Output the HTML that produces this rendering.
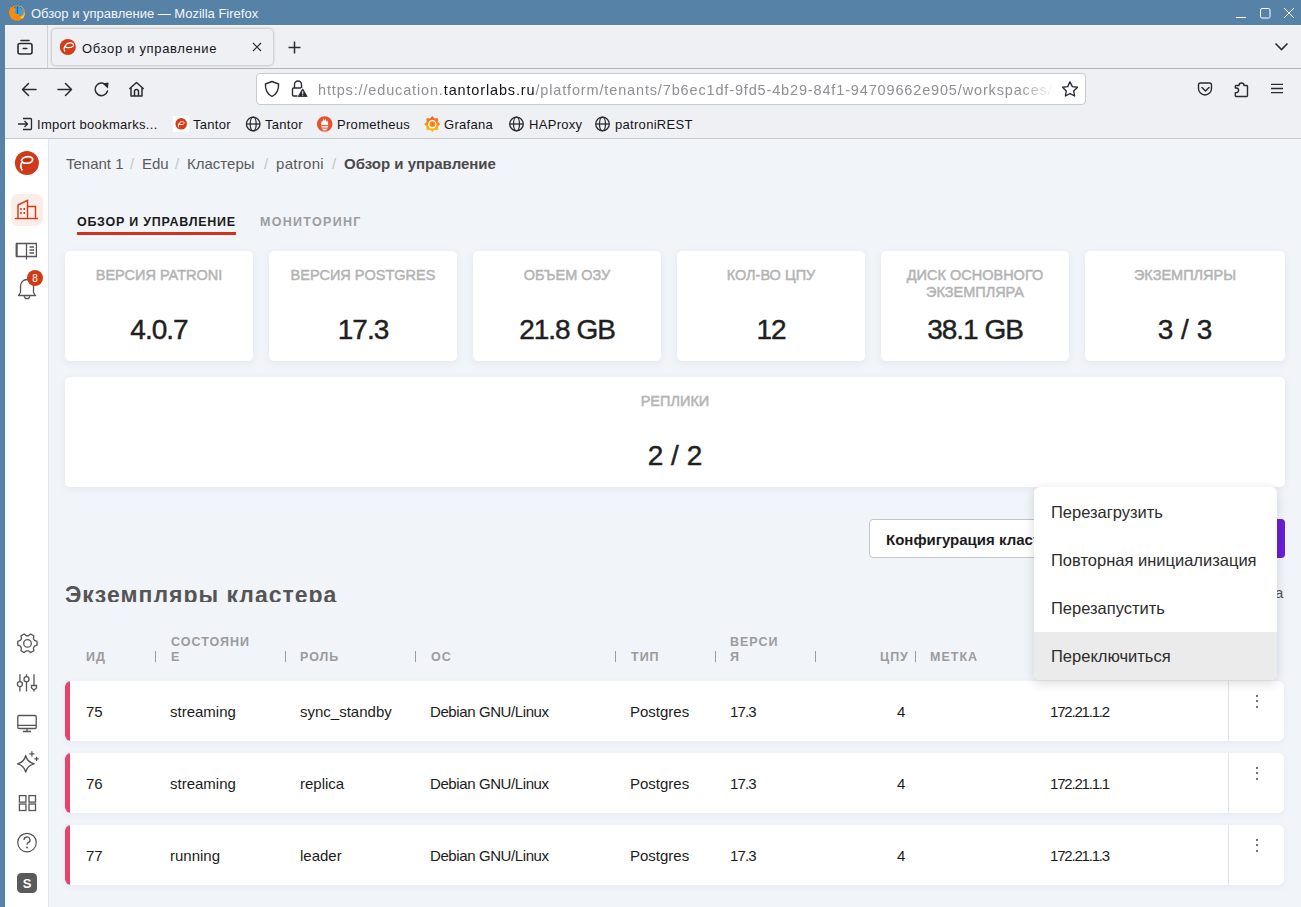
<!DOCTYPE html>
<html><head><meta charset="utf-8">
<style>
*{box-sizing:border-box;margin:0;padding:0}
html,body{width:1301px;height:907px;overflow:hidden;font-family:"Liberation Sans",sans-serif;background:#f1f4f9}
.abs{position:absolute}
#titlebar{left:0;top:0;width:1301px;height:25px;background:#5682a8}
#frameL{left:0;top:0;width:5px;height:907px;background:#5682a8}
#tabstrip{left:5px;top:25px;width:1296px;height:44px;background:#eff0f3;border-bottom:1px solid #b3b3b8}
#navbar{left:5px;top:69px;width:1296px;height:39px;background:#eff0f3}
#bmbar{left:5px;top:108px;width:1296px;height:31px;background:#eff0f3;border-bottom:1px solid #c8c8cc}
.ui{font-size:13px;color:#15141a;letter-spacing:0.3px;margin-top:1px}
#app{left:5px;top:139px;width:1296px;height:768px;background:#f1f4f9;overflow:hidden}
#sidebar{left:0;top:0;width:44px;height:768px;background:#fff;border-right:1px solid #e4e5ea}
.bc{position:absolute;top:155px;font-size:15px;color:#5a5a5a;line-height:18px;white-space:nowrap}
.sl{color:#c4c4c4}
.card{position:absolute;background:#fff;border-radius:5px;box-shadow:0 2px 8px rgba(60,70,110,0.07)}
.lbl{position:absolute;left:0;right:0;text-align:center;font-size:14.5px;color:#b4b4b4;font-weight:normal;-webkit-text-stroke:0.5px #b4b4b4;letter-spacing:0px;line-height:17px}
.val{position:absolute;left:0;right:0;text-align:center;font-size:28px;color:#1f1f1f;line-height:32px;-webkit-text-stroke:0.45px #1f1f1f;margin-top:1px;letter-spacing:-1px}
.th{position:absolute;margin-top:1px;font-size:12.5px;font-weight:bold;color:#9b9b9b;letter-spacing:1px;line-height:15px}
.sep{position:absolute;width:1px;height:11px;background:#9b9b9b}
.row{position:absolute;left:65px;width:1219px;height:59.5px;background:#fff;border-radius:6px;box-shadow:0 2px 6px rgba(60,70,110,0.06);overflow:hidden}
.row::before{content:"";position:absolute;left:0;top:0;bottom:0;width:4.5px;background:#e8436a}
.rdiv{position:absolute;left:1163px;top:0;width:1px;height:60px;background:#e4e6ec}
.dots{position:absolute;left:1191px;top:13.5px;width:2px}
.dots i{display:block;width:2.2px;height:2.2px;background:#444;border-radius:50%;margin-bottom:3.4px}
.td{position:absolute;margin-top:1px;font-size:15px;color:#1c1c1c;line-height:18px}
.mi{position:absolute;left:0;width:243px;height:48px;font-size:16.5px;color:#2c2c2c;padding-left:17px;line-height:50px}
</style></head><body>
<div id="titlebar" class="abs"></div>
<div id="frameL" class="abs"></div>
<div id="tabstrip" class="abs"></div>
<div id="navbar" class="abs"></div>
<div id="bmbar" class="abs"></div>


<div class="abs" style="left:52px;top:29px;width:221px;height:36px;background:#eff0f3;border-radius:4px;box-shadow:0 0 3px rgba(0,0,0,0.35)"></div>
<div class="abs" style="left:256px;top:73px;width:830px;height:32px;background:#fff;border:1px solid #c9c9cf;border-radius:4px"></div>
<svg class="abs" style="left:0;top:0" width="1301" height="140" viewBox="0 0 1301 140">
 <!-- firefox logo -->
 <defs>
  <radialGradient id="ffg" cx="0.4" cy="0.35" r="0.7"><stop offset="0" stop-color="#ffd54a"/><stop offset="0.5" stop-color="#ff9a1f"/><stop offset="1" stop-color="#f2561d"/></radialGradient>
 </defs>
 <circle cx="17" cy="13" r="7.7" fill="#ff8a00"/>
 <path d="M20.5 6 A7.7 7.7 0 0 1 22.5 18.5 L20 17 A5 5 0 0 0 19 7Z" fill="#ffd04a"/>
 <circle cx="18.2" cy="11.3" r="5.2" fill="#3a9ee8"/>
 <path d="M17.5 6.3 V16.5" stroke="#1f5d9e" stroke-width="1.2"/>
 <path d="M14 8 L15.5 6.5 M20 6.8 L21.5 8.5" stroke="#235e98" stroke-width="1"/>
 <path d="M9.3 13 C9.5 9.5 10.5 7.5 10.8 6.8 L12.2 8.2 L14 7.3 L15.2 9.5 C14.6 10.5 13.8 11.5 14.5 12.8 C15.5 14 17.5 14 19.5 14.2 C19 16 17.5 17.5 15.5 17.6 C12 17.6 9.3 16 9.3 13Z" fill="#ff8c00"/>
 <path d="M15 9.5 C14.6 10.5 14 11.2 14.3 12" stroke="#ffa01a" stroke-width="0.8" fill="none"/>
 <!-- window buttons -->
 <path d="M1236 17.5h10" stroke="#fff" stroke-width="1"/>
 <rect x="1260.5" y="8.5" width="9.5" height="9.5" rx="1.5" fill="none" stroke="#fff" stroke-width="1"/>
 <path d="M1284 8l10 10M1294 8l-10 10" stroke="#fff" stroke-width="1"/>
 <line x1="5" y1="25.5" x2="1301" y2="25.5" stroke="#f7f6f4" stroke-width="1"/>
 <!-- tab list icon -->
 <g fill="none" stroke="#2b2a33" stroke-width="1.6" stroke-linecap="round">
  <path d="M21 40.5h8"/>
  <rect x="18" y="43.5" width="14" height="10.5" rx="2"/>
  <path d="M23.3 48.5h3.5"/>
 </g>
 <line x1="47.5" y1="25" x2="47.5" y2="68" stroke="#d0d0d6" stroke-width="1"/>
 <!-- tab favicon -->
 <circle cx="67.8" cy="47" r="8" fill="#d53c18"/>
 <path d="M64.8 51.2 C63.8 49.5 64 47.3 65.5 45.5 M65.5 47.2 C65 44.5 67.5 42.8 70.5 42.9 C73 43 74 44.5 73.2 46 C72.3 47.4 69.5 47.8 66.2 47.4" fill="none" stroke="#fff" stroke-width="1.2" stroke-linecap="round"/>
 <!-- tab close -->
 <path d="M253 43l8 8M261 43l-8 8" stroke="#2b2a33" stroke-width="1.15"/>
 <!-- new tab plus -->
 <path d="M294.5 41.5v12M288.5 47.5h12" stroke="#2b2a33" stroke-width="1.5"/>
 <!-- chevron -->
 <path d="M1275.5 43.5l6 6 6-6" fill="none" stroke="#2b2a33" stroke-width="1.6"/>
 <!-- back / fwd -->
 <g fill="none" stroke="#2b2a33" stroke-width="1.5" stroke-linecap="round" stroke-linejoin="round">
  <path d="M22.5 89.5h13.5M28.5 83.5l-6 6 6 6"/>
  <path d="M58 89.5h13.5M65.5 83.5l6 6-6 6"/>
  <path d="M106.8 86 A6.3 6.3 0 1 0 107.5 91"/>
  <path d="M129.8 88.5 L136.5 82.5 L143.2 88.5 M131 87.5 V96 H142 V87.5 M134.5 96 V91.5 a2 2 0 0 1 4 0 V96"/>
 </g>
 <path d="M102.5 83.5 L108.5 82.5 L108 88.5Z" fill="#2b2a33"/>
 <!-- shield -->
 <path d="M272 81.5 L278.6 84 C278.8 90 276.8 94 272 96.5 C267.2 94 265.2 90 265.4 84Z" fill="none" stroke="#2b2a33" stroke-width="1.4" stroke-linejoin="round"/>
 <!-- lock with warning -->
 <g fill="none" stroke="#2b2a33" stroke-width="1.4">
  <path d="M294.5 88 V84.5 a3.5 3.5 0 0 1 7 0 V88"/>
  <path d="M297.5 96 H293.5 a1 1 0 0 1-1-1 V89 a1 1 0 0 1 1-1 H301"/>
 </g>
 <path d="M302.7 88.8 L307.2 96.5 H298.2Z" fill="#2b2a33" stroke="#2b2a33" stroke-width="0.8" stroke-linejoin="round"/>
 <path d="M302.7 91.3v2.6" stroke="#fff" stroke-width="1.1"/><circle cx="302.7" cy="95.2" r="0.6" fill="#fff"/>
 <!-- star -->
 <path d="M1070 81.8 L1072.3 86.6 L1077.5 87.3 L1073.7 90.9 L1074.6 96 L1070 93.6 L1065.4 96 L1066.3 90.9 L1062.5 87.3 L1067.7 86.6Z" fill="none" stroke="#2b2a33" stroke-width="1.4" stroke-linejoin="round"/>
 <!-- pocket -->
 <path d="M1200.5 83 H1209.5 a2 2 0 0 1 2 2 V88.5 a6.5 6.5 0 0 1 -13 0 V85 a2 2 0 0 1 2 -2Z" fill="none" stroke="#2b2a33" stroke-width="1.4"/>
 <path d="M1202 87.5l3.5 3.5 3.5-3.5" fill="none" stroke="#2b2a33" stroke-width="1.5" stroke-linecap="round"/>
 <!-- extensions -->
 <path d="M1236.2 85.5 H1239 a2.5 2.5 0 0 1 5 0 H1246.8 a0.7 0.7 0 0 1 0.7 0.7 V95.8 a0.7 0.7 0 0 1 -0.7 0.7 H1236 a0.7 0.7 0 0 1 -0.7 -0.7 V92.6 H1236.3 a2.3 2.3 0 0 0 0 -4.6 H1235.3 V86.2 a0.7 0.7 0 0 1 0.7 -0.7Z" fill="none" stroke="#2b2a33" stroke-width="1.4" stroke-linejoin="round"/>
 <!-- hamburger -->
 <path d="M1271 84.3h12M1271 88.5h12M1271 92.7h12" stroke="#2b2a33" stroke-width="1.3"/>
 <!-- bookmarks: import -->
 <g fill="none" stroke="#2b2a33" stroke-width="1.3">
  <path d="M23 118.5 H30.5 a1 1 0 0 1 1 1 V128.5 a1 1 0 0 1-1 1 H23"/>
  <path d="M18 124 H27.5 M24.5 121 l3 3-3 3"/>
 </g>
 <!-- tantor bookmark favicon -->
 <rect x="173" y="116" width="16" height="16" fill="#fff"/>
 <circle cx="181.2" cy="123.8" r="5.8" fill="#d53c18"/>
 <path d="M178.6 127 C178 125.9 178.1 124.5 179.1 123.3 M179.1 124.4 C178.8 122.6 180.4 121.5 182.4 121.6 C184 121.7 184.7 122.7 184.1 123.6 C183.5 124.5 181.7 124.8 179.6 124.5" fill="none" stroke="#fff" stroke-width="0.9" stroke-linecap="round"/>
 <!-- globes -->
 <g fill="none" stroke="#2b2a33" stroke-width="1.3">
  <circle cx="253.2" cy="124" r="6.8"/><ellipse cx="253.2" cy="124" rx="3" ry="6.8"/><path d="M246.4 124h13.6"/>
  <circle cx="516.5" cy="124" r="6.8"/><ellipse cx="516.5" cy="124" rx="3" ry="6.8"/><path d="M509.7 124h13.6"/>
  <circle cx="602.5" cy="124" r="6.8"/><ellipse cx="602.5" cy="124" rx="3" ry="6.8"/><path d="M595.7 124h13.6"/>
 </g>
 <!-- prometheus -->
 <circle cx="324.7" cy="124" r="7.8" fill="#e6522c"/>
 <path d="M321.3 125 C320.9 123 321.6 121.6 322.3 120.6 L322.9 122.2 L323.7 118.6 L324.7 120.9 L325.7 118.6 L326.5 122.2 L327.1 120.6 C327.8 121.6 328.5 123 328.1 125Z" fill="#fff"/>
 <path d="M321.2 126.4h7M321.6 127.9h6.2" stroke="#fff" stroke-width="0.9"/>
 <path d="M322.4 129 a2.3 1.6 0 0 0 4.6 0Z" fill="#fff"/>
 <!-- grafana -->
 <defs><linearGradient id="grg" x1="0" y1="0" x2="0" y2="1"><stop offset="0" stop-color="#f05a28"/><stop offset="1" stop-color="#fbca0a"/></linearGradient></defs>
 <path d="M432.30 116.60 L434.44 119.03 L437.67 118.83 L437.47 122.06 L439.90 124.20 L437.47 126.34 L437.67 129.57 L434.44 129.37 L432.30 131.80 L430.16 129.37 L426.93 129.57 L427.13 126.34 L424.70 124.20 L427.13 122.06 L426.93 118.83 L430.16 119.03Z" fill="url(#grg)" stroke="url(#grg)" stroke-width="1" stroke-linejoin="round"/>
 <circle cx="432.3" cy="124.2" r="3.6" fill="none" stroke="#fff" stroke-width="1.3"/>
 <circle cx="432.7" cy="124.5" r="1.4" fill="#f47a20"/>
 <path d="M432.3 127.8 h4" stroke="url(#grg)" stroke-width="1.4"/>
</svg>

<!-- title -->
<div class="abs" style="left:31px;top:6px;font-size:13px;color:#f4f6f8;line-height:16px">Обзор и управление — Mozilla Firefox</div>

<!-- tab -->
<div class="abs ui" style="left:82px;top:40px;line-height:16px;letter-spacing:0.67px">Обзор и управление</div>

<!-- nav -->
<div class="abs" style="left:318px;top:82px;font-size:14.5px;letter-spacing:0.85px;color:#8f8f94;line-height:16px;white-space:nowrap;width:740px;overflow:hidden;-webkit-mask-image:linear-gradient(to right,#000 700px,transparent 736px)">https://education.<span style="color:#15141a">tantorlabs.ru</span>/platform/tenants/7b6ec1df-9fd5-4b29-84f1-94709662e905/workspaces/overview</div>

<!-- bookmarks -->
<div class="abs ui" style="left:37px;top:116px;line-height:16px">Import bookmarks...</div>
<div class="abs ui" style="left:193px;top:116px;line-height:16px">Tantor</div>
<div class="abs ui" style="left:265px;top:116px;line-height:16px">Tantor</div>
<div class="abs ui" style="left:337px;top:116px;line-height:16px">Prometheus</div>
<div class="abs ui" style="left:444px;top:116px;line-height:16px">Grafana</div>
<div class="abs ui" style="left:529px;top:116px;line-height:16px">HAProxy</div>
<div class="abs ui" style="left:615px;top:116px;line-height:16px">patroniREST</div>

<div id="app" class="abs">
  <div id="sidebar" class="abs"></div>
</div>
<svg class="abs" style="left:0;top:139px" width="48" height="768" viewBox="0 139 48 768">
 <!-- logo -->
 <circle cx="26.9" cy="162.9" r="12" fill="#cf3b1a"/>
 <path d="M22 170 C20.5 167.5 20.5 164 22.5 161.5" fill="none" stroke="#fff" stroke-width="1.6" stroke-linecap="round"/>
 <path d="M21.5 160.5 C22 157.5 27 156 30.5 157 C33.5 158 33.5 161.5 30 162.8 C27.5 163.5 24.5 163.3 22.5 162.5" fill="none" stroke="#fff" stroke-width="1.6" stroke-linecap="round"/>
 <path d="M23.5 159.5 C26 158.5 29.5 158.5 31 160 C29.5 162 26 162 23.5 161.5Z" fill="#b8320f"/>
 <!-- active bg -->
 <rect x="11" y="194" width="32" height="32" rx="7" fill="#fcede9"/>
 <!-- building -->
 <g fill="none" stroke="#d13a17" stroke-width="1.4">
  <path d="M14.8 218.5 H38"/>
  <path d="M18 218.5 V205 L27.5 200.3 V218.5"/>
  <path d="M27.5 206.5 H35.5 V218.5"/>
 </g>
 <g fill="#d13a17"><rect x="20.2" y="208" width="1.5" height="2"/><rect x="23.5" y="208" width="1.5" height="2"/><rect x="20.2" y="212" width="1.5" height="2"/><rect x="23.5" y="212" width="1.5" height="2"/></g>
 <!-- book -->
 <g fill="none" stroke="#555" stroke-width="1.3">
  <path d="M16.6 243.5 H26.5 V256.5 H16.6Z"/>
  <path d="M26.5 243.5 H36.4 V256.5 H26.5"/>
  <path d="M26.5 256.5 V259.5"/>
  <path d="M29.5 247h4.5M29.5 250h4.5M29.5 253h4.5" stroke-width="1.5"/>
 </g>
 <path d="M16.6 243.5 V256.5" stroke="#555" stroke-width="2"/>
 <!-- bell -->
 <path d="M18.5 295.5 H35.5 L33.5 292.5 V286 a6.5 6.5 0 0 0 -13 0 V292.5Z" fill="none" stroke="#555" stroke-width="1.3" stroke-linejoin="round"/>
 <path d="M24 296 L25.5 298.5 H28.5 L30 296" fill="none" stroke="#555" stroke-width="1.3"/>
 <circle cx="35" cy="278" r="8" fill="#d13a17"/>
 <text x="35" y="281.5" font-family="Liberation Sans" font-size="10" fill="#fff" text-anchor="middle">8</text>
 <!-- gear -->
 <path d="M34.45 640.45 L37.02 641.43 L37.02 645.17 L34.45 646.15 L33.39 647.98 L33.83 650.70 L30.59 652.57 L28.46 650.83 L26.34 650.83 L24.21 652.57 L20.97 650.70 L21.41 647.98 L20.35 646.15 L17.78 645.17 L17.78 641.43 L20.35 640.45 L21.41 638.62 L20.97 635.90 L24.21 634.03 L26.34 635.77 L28.46 635.77 L30.59 634.03 L33.83 635.90 L33.39 638.62Z" fill="none" stroke="#555" stroke-width="1.3" stroke-linejoin="round"/>
 <circle cx="27.5" cy="643.4" r="3.8" fill="none" stroke="#555" stroke-width="1.3"/>
 <!-- sliders -->
 <g stroke="#555" stroke-width="1.3" fill="#fff">
  <path d="M19.9 674.2 V691.6 M26.5 674.2 V691.6 M34 674.2 V691.6"/>
  <circle cx="19.9" cy="684.1" r="2.5"/>
  <circle cx="26.5" cy="679.2" r="2.5"/>
  <path d="M31.5 685.5 H36.5 V688 L34 690 L31.5 688Z"/>
 </g>
 <!-- monitor -->
 <g fill="none" stroke="#555" stroke-width="1.3">
  <rect x="17.8" y="715.5" width="18.4" height="13" rx="1.2"/>
  <path d="M17.8 725.3 H36.2 M27 728.5 V731.5 M23 731.5 H31"/>
 </g>
 <!-- sparkles -->
 <path d="M25.7 755.5 Q27.3 762.3 34.2 763.9 Q27.3 765.5 25.7 772.2 Q24.1 765.5 17.5 763.9 Q24.1 762.3 25.7 755.5Z" fill="none" stroke="#555" stroke-width="1.3" stroke-linejoin="round"/>
 <path d="M31.9 751.2 V756.5 M29.3 753.8 H34.5 M36.5 756.8 V761 M34.4 758.9 H38.6" stroke="#555" stroke-width="1.2"/>
 <!-- grid -->
 <g fill="none" stroke="#555" stroke-width="1.3">
  <rect x="19.4" y="795.6" width="6.5" height="6.5"/><rect x="29" y="795.6" width="6.5" height="6.5"/>
  <rect x="19.4" y="804" width="6.5" height="6.5"/><rect x="29" y="804" width="6.5" height="6.5"/>
 </g>
 <!-- help -->
 <circle cx="27" cy="842.6" r="9.3" fill="none" stroke="#555" stroke-width="1.2"/>
 <path d="M24 840 a3 3 0 1 1 4.2 2.7 c-0.8 0.4 -1.2 1 -1.2 2" fill="none" stroke="#555" stroke-width="1.3"/>
 <circle cx="27" cy="847.5" r="0.9" fill="#555"/>
 <!-- S avatar -->
 <rect x="17" y="873" width="20" height="20" rx="4.5" fill="#5a5a5a"/>
 <text x="27" y="888" font-family="Liberation Sans" font-weight="bold" font-size="13" fill="#fff" text-anchor="middle">S</text>
</svg>


<!-- breadcrumb (page coords) -->
<div class="bc" style="left:66px">Tenant 1</div>
<div class="bc sl" style="left:130px">/</div>
<div class="bc" style="left:142px">Edu</div>
<div class="bc sl" style="left:175px">/</div>
<div class="bc" style="left:187px">Кластеры</div>
<div class="bc sl" style="left:264px">/</div>
<div class="bc" style="left:276px;letter-spacing:0.3px">patroni</div>
<div class="bc sl" style="left:332px">/</div>
<div class="bc" style="left:344px;font-weight:bold;color:#4a4a4a">Обзор и управление</div>
<!-- tabs -->
<div class="abs" style="left:77px;top:215px;font-size:12.5px;font-weight:bold;letter-spacing:0.75px;color:#1b1b1b;line-height:15px">ОБЗОР И УПРАВЛЕНИЕ</div>
<div class="abs" style="left:77px;top:232px;width:159px;height:2.5px;background:#d0321c"></div>
<div class="abs" style="left:260px;top:215px;font-size:12.5px;font-weight:bold;letter-spacing:1.3px;color:#9d9d9d;line-height:15px">МОНИТОРИНГ</div>

<!-- cards -->
<div class="card" style="left:65px;top:251px;width:188px;height:110px"><div class="lbl" style="top:16px">ВЕРСИЯ PATRONI</div><div class="val" style="top:62px">4.0.7</div></div>
<div class="card" style="left:269px;top:251px;width:188px;height:110px"><div class="lbl" style="top:16px">ВЕРСИЯ POSTGRES</div><div class="val" style="top:62px">17.3</div></div>
<div class="card" style="left:473px;top:251px;width:188px;height:110px"><div class="lbl" style="top:16px">ОБЪЕМ ОЗУ</div><div class="val" style="top:62px">21.8 GB</div></div>
<div class="card" style="left:677px;top:251px;width:188px;height:110px"><div class="lbl" style="top:16px">КОЛ-ВО ЦПУ</div><div class="val" style="top:62px">12</div></div>
<div class="card" style="left:881px;top:251px;width:188px;height:110px"><div class="lbl" style="top:16px">ДИСК ОСНОВНОГО<br>ЭКЗЕМПЛЯРА</div><div class="val" style="top:62px">38.1 GB</div></div>
<div class="card" style="left:1085px;top:251px;width:200px;height:110px"><div class="lbl" style="top:16px">ЭКЗЕМПЛЯРЫ</div><div class="val" style="top:62px;letter-spacing:0">3 / 3</div></div>
<div class="card" style="left:65px;top:377px;width:1220px;height:110px"><div class="lbl" style="top:16px">РЕПЛИКИ</div><div class="val" style="top:62px;letter-spacing:0">2 / 2</div></div>

<!-- buttons -->
<div class="abs" style="left:869px;top:519px;width:300px;height:39px;background:#fff;border:1px solid #c3c6ce;border-radius:4px"></div>
<div class="abs" style="left:886px;top:531px;font-size:15px;font-weight:bold;color:#1c1c1c;line-height:18px">Конфигурация кластера</div>
<div class="abs" style="left:1180px;top:519px;width:105px;height:39px;background:#6a1fd6;border-radius:4px"></div>

<!-- heading -->
<div class="abs" style="left:65px;top:578px;width:600px;height:24px;overflow:hidden"><div style="font-size:23px;font-weight:bold;color:#555;line-height:28px;letter-spacing:1px;margin-top:3px">Экземпляры кластера</div></div>
<div class="abs" style="left:1275px;top:584px;font-size:15px;color:#555;line-height:18px">а</div>

<!-- table header -->
<div class="th" style="left:86px;top:649px">ИД</div>
<div class="sep" style="left:155px;top:651px"></div>
<div class="th" style="left:171px;top:634px">СОСТОЯНИ<br>Е</div>
<div class="sep" style="left:285px;top:651px"></div>
<div class="th" style="left:300px;top:649px">РОЛЬ</div>
<div class="sep" style="left:415px;top:651px"></div>
<div class="th" style="left:431px;top:649px">ОС</div>
<div class="sep" style="left:615px;top:651px"></div>
<div class="th" style="left:631px;top:649px">ТИП</div>
<div class="sep" style="left:715px;top:651px"></div>
<div class="th" style="left:730px;top:634px">ВЕРСИ<br>Я</div>
<div class="sep" style="left:815px;top:651px"></div>
<div class="th" style="left:880px;top:649px">ЦПУ</div>
<div class="sep" style="left:915px;top:651px"></div>
<div class="th" style="left:930px;top:649px">МЕТКА</div>

<!-- rows -->
<div class="row" style="top:681px"><div class="rdiv"></div><div class="dots"><i></i><i></i><i></i></div></div>
<div class="td" style="left:86px;top:702px">75</div>
<div class="td" style="left:170px;top:702px">streaming</div>
<div class="td" style="left:300px;top:702px">sync_standby</div>
<div class="td" style="left:430px;top:702px;letter-spacing:-0.4px">Debian GNU/Linux</div>
<div class="td" style="left:630px;top:702px">Postgres</div>
<div class="td" style="left:730px;top:702px;letter-spacing:-0.9px">17.3</div>
<div class="td" style="left:897px;top:702px">4</div>
<div class="td" style="left:1050px;top:702px;letter-spacing:-1.2px">172.21.1.2</div>
<div class="row" style="top:753px"><div class="rdiv"></div><div class="dots"><i></i><i></i><i></i></div></div>
<div class="td" style="left:86px;top:774px">76</div>
<div class="td" style="left:170px;top:774px">streaming</div>
<div class="td" style="left:300px;top:774px">replica</div>
<div class="td" style="left:430px;top:774px;letter-spacing:-0.4px">Debian GNU/Linux</div>
<div class="td" style="left:630px;top:774px">Postgres</div>
<div class="td" style="left:730px;top:774px;letter-spacing:-0.9px">17.3</div>
<div class="td" style="left:897px;top:774px">4</div>
<div class="td" style="left:1050px;top:774px;letter-spacing:-1.2px">172.21.1.1</div>
<div class="row" style="top:825px"><div class="rdiv"></div><div class="dots"><i></i><i></i><i></i></div></div>
<div class="td" style="left:86px;top:846px">77</div>
<div class="td" style="left:170px;top:846px">running</div>
<div class="td" style="left:300px;top:846px">leader</div>
<div class="td" style="left:430px;top:846px;letter-spacing:-0.4px">Debian GNU/Linux</div>
<div class="td" style="left:630px;top:846px">Postgres</div>
<div class="td" style="left:730px;top:846px;letter-spacing:-0.9px">17.3</div>
<div class="td" style="left:897px;top:846px">4</div>
<div class="td" style="left:1050px;top:846px;letter-spacing:-1.2px">172.21.1.3</div>


<!-- dropdown -->
<div class="abs" style="left:1034px;top:487px;width:243px;height:193px;background:#fff;border-radius:6px;box-shadow:0 3px 12px rgba(0,0,0,0.15);overflow:hidden">
  <div class="mi" style="top:0">Перезагрузить</div>
  <div class="mi" style="top:48px">Повторная инициализация</div>
  <div class="mi" style="top:96px">Перезапустить</div>
  <div class="mi" style="top:145px;height:48px;background:#ebebeb;line-height:48px">Переключиться</div>
</div>
</body></html>
